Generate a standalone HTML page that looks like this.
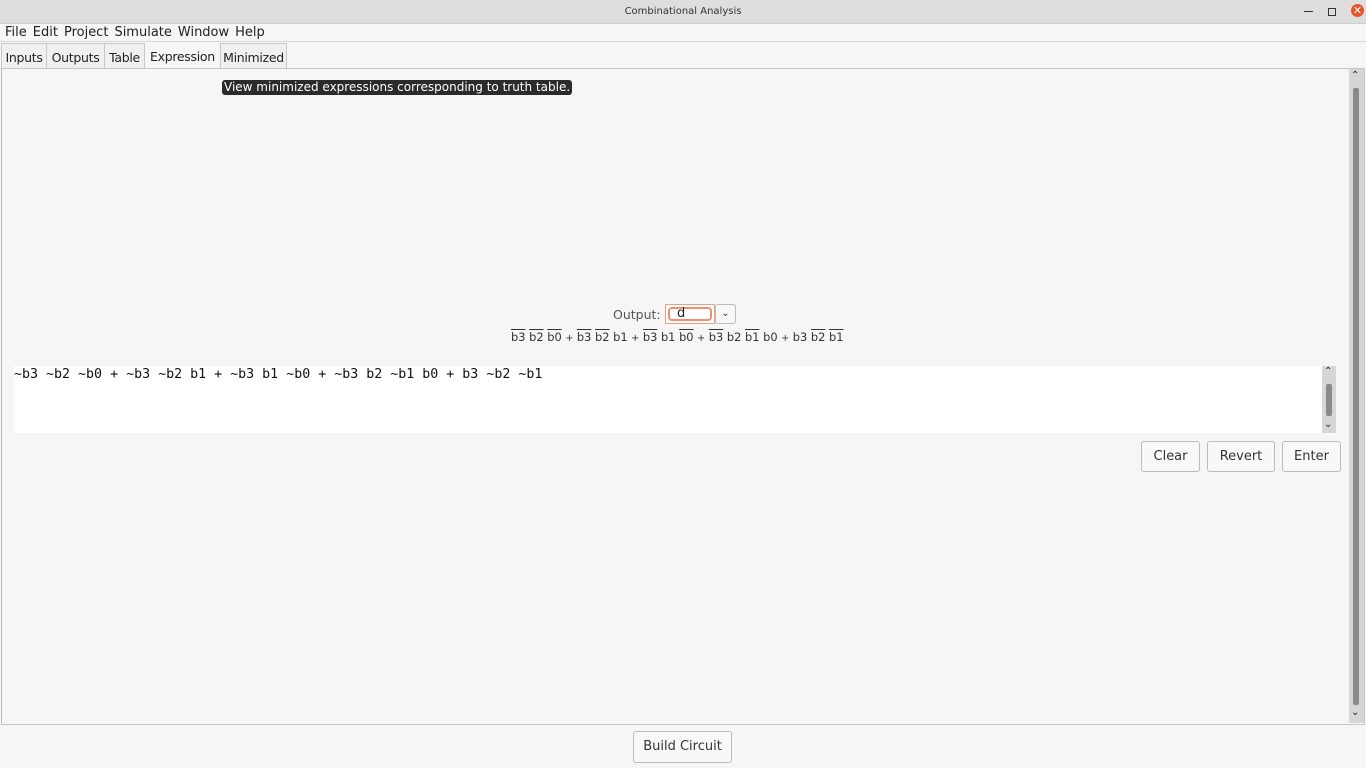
<!DOCTYPE html>
<html><head><style>
body{margin:0;width:1366px;height:768px;background:#f6f6f6;font-family:"DejaVu Sans","Liberation Sans",sans-serif;font-size:13px;color:#222;position:relative;overflow:hidden}
.a{position:absolute}
.title{left:0;top:0;width:1366px;height:23px;background:#dedede;border-bottom:1px solid #cfcfcf;font-size:10px;text-align:center;line-height:23px;color:#333}
.menu{top:24px;left:0;width:1366px;height:17px;border-bottom:1px solid #d8d8d8}
.menu span{margin-left:5px;margin-right:1px;line-height:17px;font-size:13px}
.tab{top:43px;height:25px;border:1px solid #c8c8c8;border-bottom:none;line-height:28px;font-size:12.5px;text-align:center;box-sizing:border-box;background:#f0f0f0;letter-spacing:-0.3px}
.btn{border:1px solid #bbb;border-radius:3px;background:#f8f8f8;text-align:center;box-sizing:border-box;font-size:13px;color:#333}
.ov{text-decoration:overline}
</style></head><body>
<div class="a title">Combinational Analysis</div>
<div class="a" style="left:1304px;top:11px;width:9px;height:1px;background:#333"></div>
<div class="a" style="left:1328px;top:8px;width:6px;height:6px;border:1px solid #333"></div>
<div class="a" style="left:1351px;top:4px;width:13px;height:13px;border-radius:50%;background:#e9542a;color:#fff;font-size:11px;line-height:13px;text-align:center">✕</div>
<div class="a menu"><span>File</span><span>Edit</span><span>Project</span><span>Simulate</span><span>Window</span><span>Help</span></div>
<div class="a tab" style="left:1px;width:46px">Inputs</div>
<div class="a tab" style="left:46px;width:59px">Outputs</div>
<div class="a tab" style="left:104px;width:41px">Table</div>
<div class="a" style="left:150px;top:49px;font-size:12.5px;letter-spacing:-0.3px">Expression</div>
<div class="a tab" style="left:220px;width:67px">Minimized</div>
<div class="a" style="left:1px;top:68px;width:1362px;height:655px;border:1px solid #c6c6c6;border-left:1px solid #bbb"></div>
<div class="a" style="left:1349px;top:69px;width:15px;height:654px;background:#d6d6d6"></div>
<div class="a" style="left:1353px;top:88px;width:6px;height:617px;background:#8a8a8a;border-radius:2px"></div>
<div class="a" style="left:1351px;top:70px;font-size:10px">⌃</div>
<div class="a" style="left:1351px;top:707px;font-size:10px">⌄</div>
<div class="a" style="left:222px;top:80px;height:15px;padding:0 2px;background:#2b2b2b;color:#fff;border-radius:3px;font-size:12px;line-height:15px">View minimized expressions corresponding to truth table.</div>
<div class="a" style="left:613px;top:307px;color:#555;font-size:12.5px">Output:</div>
<div class="a" style="left:665px;top:304px;width:50px;height:20px;border:1px solid #f0a080;box-sizing:border-box;background:#fff"></div>
<div class="a" style="left:668px;top:307px;width:44px;height:14px;border:2px solid #f09070;border-radius:4px;box-sizing:border-box;font-size:13px;line-height:10px;padding-left:7px">d</div>
<div class="a btn" style="left:715px;top:304px;width:21px;height:20px;font-size:10px;line-height:18px">⌄</div>
<div class="a" style="left:511px;top:330px;font-size:11.4px;color:#333;white-space:nowrap"><span class="ov">b3</span> <span class="ov">b2</span> <span class="ov">b0</span> <small>+</small> <span class="ov">b3</span> <span class="ov">b2</span> b1 <small>+</small> <span class="ov">b3</span> b1 <span class="ov">b0</span> <small>+</small> <span class="ov">b3</span> b2 <span class="ov">b1</span> b0 <small>+</small> b3 <span class="ov">b2</span> <span class="ov">b1</span></div>
<div class="a" style="left:14px;top:366px;width:1308px;height:67px;background:#fff"></div>
<div class="a" style="left:1322px;top:366px;width:14px;height:67px;background:#d6d6d6"></div>
<div class="a" style="left:1326px;top:384px;width:6px;height:32px;background:#8a8a8a;border-radius:2px"></div>
<div class="a" style="left:1324px;top:366px;font-size:10px">⌃</div>
<div class="a" style="left:1324px;top:419px;font-size:10px">⌄</div>
<div class="a" style="left:14px;top:367px;font-family:'DejaVu Sans Mono','Liberation Mono',monospace;font-size:13.3px;white-space:pre;color:#111">~b3 ~b2 ~b0 + ~b3 ~b2 b1 + ~b3 b1 ~b0 + ~b3 b2 ~b1 b0 + b3 ~b2 ~b1</div>
<div class="a btn" style="left:1141px;top:441px;width:59px;height:31px;line-height:29px">Clear</div>
<div class="a btn" style="left:1207px;top:441px;width:68px;height:31px;line-height:29px">Revert</div>
<div class="a btn" style="left:1282px;top:441px;width:59px;height:31px;line-height:29px">Enter</div>
<div class="a btn" style="left:633px;top:731px;width:99px;height:32px;line-height:30px">Build Circuit</div>
</body></html>
